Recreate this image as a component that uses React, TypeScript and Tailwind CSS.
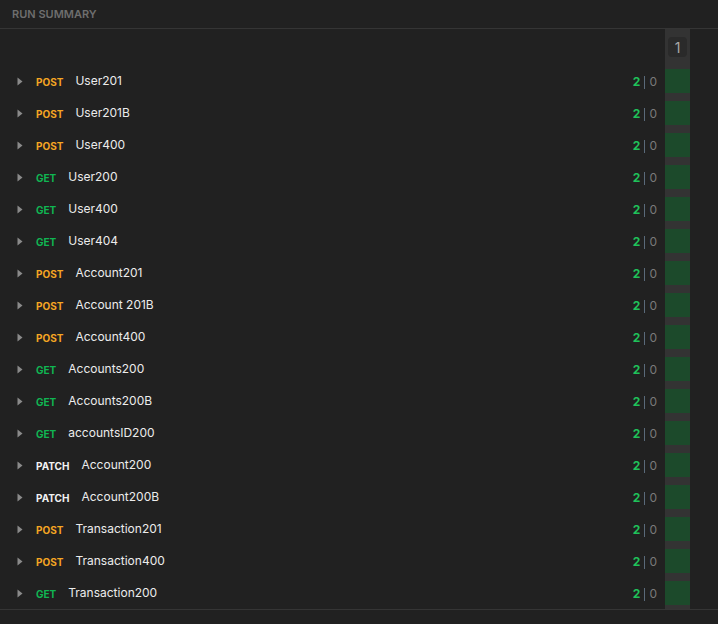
type Method = 'GET' | 'POST' | 'PATCH';

const requests: { method: Method; name: string }[] = [
  { method: 'POST', name: 'User201' },
  { method: 'POST', name: 'User201B' },
  { method: 'POST', name: 'User400' },
  { method: 'GET', name: 'User200' },
  { method: 'GET', name: 'User400' },
  { method: 'GET', name: 'User404' },
  { method: 'POST', name: 'Account201' },
  { method: 'POST', name: 'Account 201B' },
  { method: 'POST', name: 'Account400' },
  { method: 'GET', name: 'Accounts200' },
  { method: 'GET', name: 'Accounts200B' },
  { method: 'GET', name: 'accountsID200' },
  { method: 'PATCH', name: 'Account200' },
  { method: 'PATCH', name: 'Account200B' },
  { method: 'POST', name: 'Transaction201' },
  { method: 'POST', name: 'Transaction400' },
  { method: 'GET', name: 'Transaction200' },
];

const methodColor: Record<Method, string> = {
  GET: 'text-[#10b552]',
  POST: 'text-[#f5a623]',
  PATCH: 'text-[#f2f2f2]',
};

function Caret() {
  return (
    <svg width="6" height="9" viewBox="0 0 6 9" className="shrink-0">
      <path d="M0.5 0.5 L5.5 4.5 L0.5 8.5 Z" fill="#8a8a8a" />
    </svg>
  );
}

function RequestRow({ method, name }: { method: Method; name: string }) {
  return (
    <div className="h-8 flex items-center pl-[17px] pr-2">
      <Caret />
      <span className={`ml-[13px] translate-y-px text-[10px] font-bold ${methodColor[method]}`}>{method}</span>
      <span className="ml-[12px] text-[12px] text-[#ececec]">{name}</span>
      <div className="ml-auto flex items-center text-[12px] translate-y-px">
        <span className="font-bold text-[#1fc25a]">2</span>
        <span className="mx-[4px] h-[13px] w-px bg-[#5a6a7a]" />
        <span className="text-[#7a7a7a]">0</span>
      </div>
    </div>
  );
}

export default function App() {
  return (
    <div
      className="w-[718px] h-[624px] bg-[#212121] overflow-hidden"
      style={{ fontFamily: 'Inter, "Noto Sans", sans-serif' }}
    >
      <div className="h-[29px] border-b border-[#353535] flex items-center px-3">
        <span className="text-[11px] font-semibold text-[#6e6e6e]">RUN SUMMARY</span>
      </div>

      <div className="flex border-b border-[#353535]">
        <div className="flex-1">
          <div className="h-9" />
          {requests.map((r, i) => (
            <RequestRow key={i} method={r.method} name={r.name} />
          ))}
        </div>
        <div className="w-[25px] bg-[#333333]">
          <div className="h-9 flex justify-center pt-[8px]">
            <div className="w-[19px] h-[20px] rounded bg-[#2a2a2a] flex items-center justify-center text-[14px] text-[#a8a8a8]">
              1
            </div>
          </div>
          {requests.map((_, i) => (
            <div key={i} className="h-8 py-1">
              <div className="h-full bg-[#1c4a2b]" />
            </div>
          ))}
        </div>
        <div className="w-[28px]" />
      </div>
    </div>
  );
}
